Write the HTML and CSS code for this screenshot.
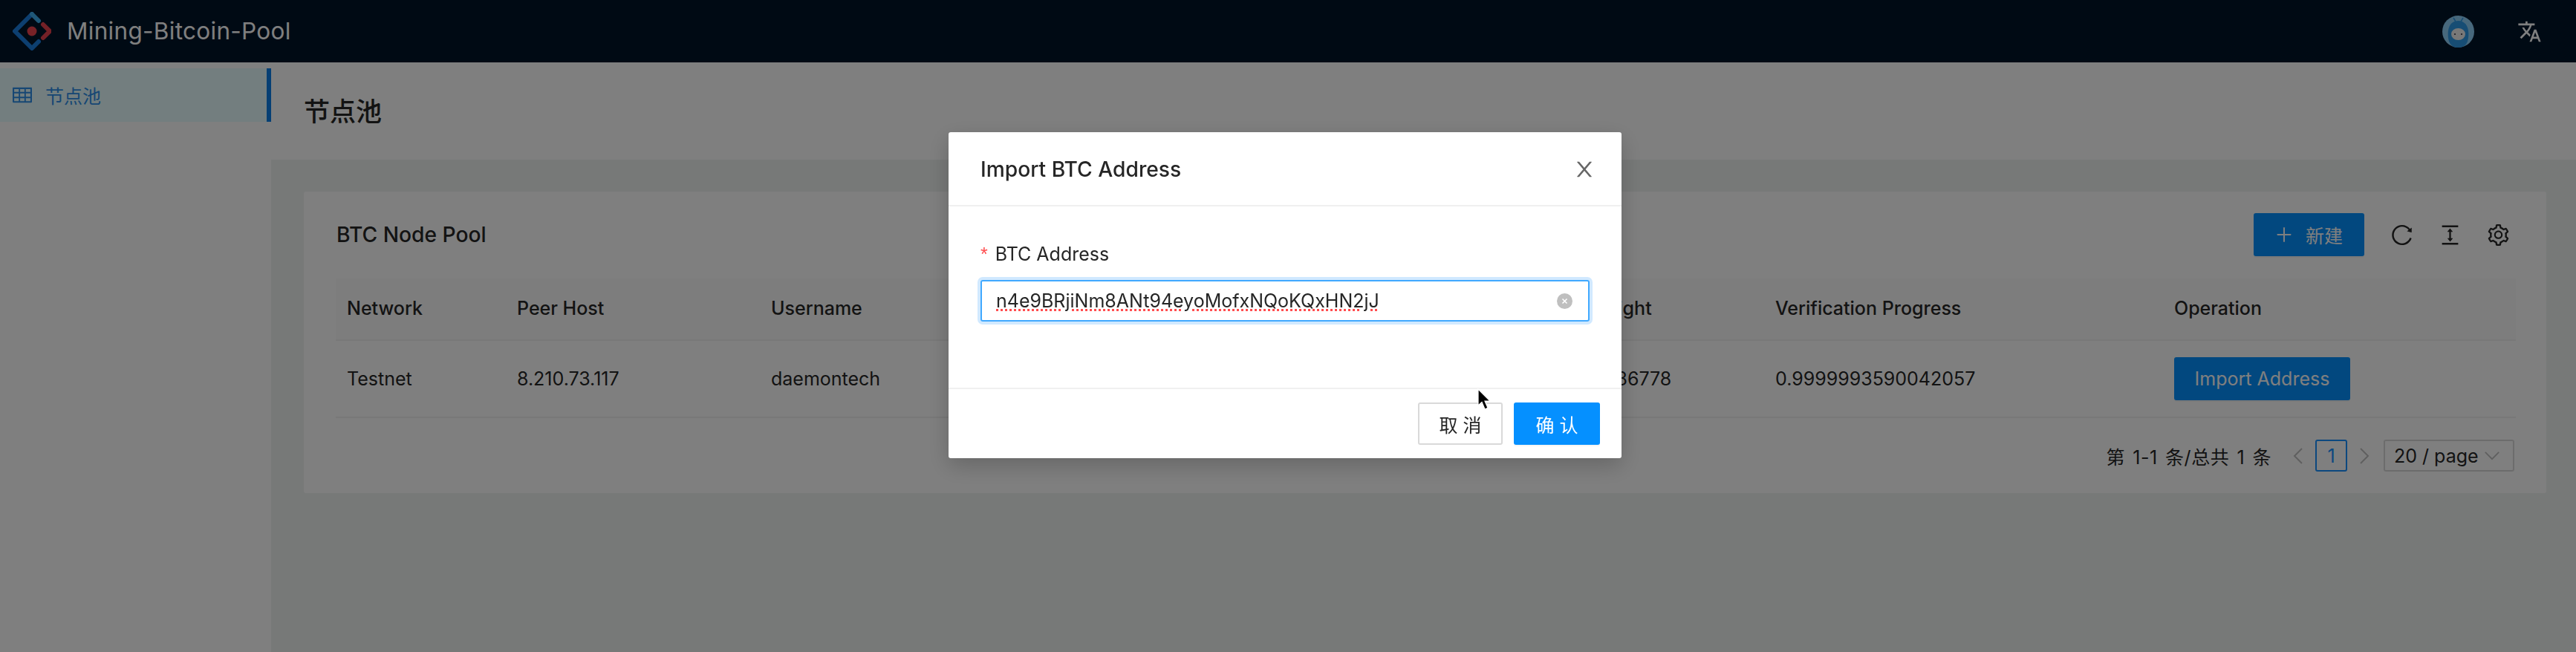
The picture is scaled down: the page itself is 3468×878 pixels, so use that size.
FILE: index.html
```html
<!DOCTYPE html>
<html lang="zh">
<head>
<meta charset="utf-8">
<title>Mining-Bitcoin-Pool</title>
<link rel="stylesheet" href="styles.css">
</head>
<body>
<div class="app">
  <header class="topbar">
    <svg class="logo" viewBox="0 0 52 52" aria-hidden="true">
      <path d="M26 3 L3 26 L26 49 L35 40" fill="none" stroke="#1a7fe0" stroke-width="6" stroke-linejoin="round" stroke-linecap="round"/>
      <path d="M26 3 L35 12" fill="none" stroke="#3fb0f0" stroke-width="6" stroke-linecap="round"/>
      <path d="M41 17 L50 26 L41 35" fill="none" stroke="#e8434f" stroke-width="6" stroke-linejoin="round" stroke-linecap="round"/>
      <circle cx="26" cy="26" r="6.5" fill="#f0444f"/>
    </svg>
    <div class="brand">Mining-Bitcoin-Pool</div>
    <div class="top-actions">
      <svg class="avatar" viewBox="0 0 43 43" aria-hidden="true">
        <circle cx="21.5" cy="21.5" r="21.5" fill="#8fd0f8"/>
        <path d="M8 30 C6 14 13 7 21.500 7 C30 7 37 14 35 30 C34 38 30 43 21.500 43 C13 43 9 38 8 30Z" fill="#2f9be8"/>
        <ellipse cx="21.5" cy="25" rx="9.500" ry="8" fill="#f0f0f0"/>
        <circle cx="17" cy="25" r="1.100" fill="#334"/>
        <circle cx="26" cy="25" r="1.100" fill="#334"/>
        <path d="M15 3 L18 8 M28 3 L25 8" stroke="#2f9be8" stroke-width="1.500"/>
      </svg>
      <svg class="translate" viewBox="0 0 24 24" aria-hidden="true"><path d="M12.87 15.07l-2.54-2.51.03-.03c1.74-1.94 2.98-4.17 3.71-6.53H17V4h-7V2H8v2H1v1.99h11.17C11.5 7.92 10.44 9.75 9 11.35 8.07 10.32 7.3 9.19 6.69 8h-2c.73 1.63 1.73 3.17 2.98 4.56l-5.09 5.02L4 19l5-5 3.11 3.11.76-2.04zM18.5 10h-2L12 22h2l1.12-3h4.75L21 22h2l-4.5-12zm-2.62 7l1.62-4.33L19.12 17h-3.24z"/></svg>
    </div>
  </header>
  <div class="below">
    <aside class="sidebar">
      <div class="menu-item">
        <svg class="menu-icon" viewBox="64 64 896 896" aria-hidden="true"><path d="M928 160H96c-17.7 0-32 14.3-32 32v640c0 17.7 14.3 32 32 32h832c17.700 0 32-14.300 32-32V192c0-17.700-14.300-32-32-32zm-40 208H676V232h212v136zm0 224H676V432h212v160zM412 432h200v160H412V432zm200-64H412V232h200v136zm-264 0H136V232h212v136zm-212 64h212v160H136V432zm0 224h212v136H136V656zm276 0h200v136H412V656zm476 136H676V656h212v136z"/></svg>
        <span>节点池</span>
      </div>
    </aside>
    <main class="main">
      <div class="page-head">节点池</div>
      <div class="page-body">
        <section class="card">
          <div class="toolbar">
            <div class="card-title">BTC Node Pool</div>
            <div class="tools">
              <button class="btn btn-primary btn-new">
                <svg class="plus" viewBox="64 64 896 896" aria-hidden="true"><path d="M482 152h60q8 0 8 8v704q0 8-8 8h-60q-8 0-8-8V160q0-8 8-8z"/><path d="M176 474h672q8 0 8 8v60q0 8-8 8H176q-8 0-8-8v-60q0-8 8-8z"/></svg>
                <span>新建</span>
              </button>
              <svg class="tool" viewBox="64 64 896 896" aria-hidden="true"><path d="M909.1 209.3l-56.4 44.1C775.8 155.1 656.2 92 521.9 92 290 92 102.3 279.5 102 511.5 101.7 743.7 289.8 932 521.9 932c181.3 0 335.8-115 394.6-276.1 1.5-4.2-.7-8.9-4.9-10.3l-56.7-19.5a8 8 0 00-10.1 4.8c-1.8 5-3.8 10-5.9 14.9-17.3 41-42.1 77.8-73.7 109.4A344.77 344.77 0 01655.9 829c-42.3 17.9-87.4 27-133.8 27-46.5 0-91.5-9.1-133.8-27A341.5 341.5 0 01279 755.2a342.16 342.16 0 01-73.7-109.4c-17.9-42.4-27-87.4-27-133.9s9.1-91.5 27-133.9c17.3-41 42.1-77.8 73.7-109.4 31.6-31.6 68.4-56.4 109.3-73.8 42.3-17.9 87.4-27 133.8-27 46.5 0 91.5 9.1 133.8 27a341.5 341.5 0 01109.3 73.8c9.9 9.9 19.2 20.4 27.8 31.4l-60.2 47a8 8 0 003 14.1l175.6 43c5 1.2 9.9-2.6 9.9-7.7l.8-180.9c-.1-6.6-7.8-10.3-13-6.2z"/></svg>
              <svg class="tool" viewBox="64 64 896 896" aria-hidden="true"><path d="M840 836H184c-4.4 0-8 3.6-8 8v60c0 4.4 3.6 8 8 8h656c4.4 0 8-3.6 8-8v-60c0-4.4-3.6-8-8-8zm0-724H184c-4.4 0-8 3.6-8 8v60c0 4.4 3.6 8 8 8h656c4.4 0 8-3.6 8-8v-60c0-4.4-3.6-8-8-8zM610.8 378c6 0 9.4-7 5.7-11.7L515.7 238.7a7.14 7.14 0 00-11.3 0L403.6 366.3a7.23 7.23 0 005.7 11.7H476v268h-62.8c-6 0-9.4 7-5.7 11.7l100.8 127.5c2.9 3.7 8.5 3.7 11.3 0l100.8-127.5c3.7-4.7.4-11.7-5.7-11.7H548V378h62.8z"/></svg>
              <svg class="tool" viewBox="64 64 896 896" aria-hidden="true"><path d="M924.8 625.7l-65.5-56c3.1-19 4.7-38.4 4.7-57.8s-1.6-38.8-4.7-57.8l65.5-56a32.03 32.03 0 009.3-35.2l-.9-2.6a443.74 443.74 0 00-79.7-137.9l-1.8-2.1a32.12 32.12 0 00-35.1-9.5l-81.3 28.9c-30-24.6-63.5-44-99.7-57.6l-15.7-85a32.05 32.05 0 00-25.8-25.7l-2.7-.5c-52.1-9.4-106.9-9.4-159 0l-2.7.5a32.05 32.05 0 00-25.8 25.7l-15.8 85.4a351.86 351.86 0 00-99 57.4l-81.9-29.1a32 32 0 00-35.1 9.5l-1.8 2.1a446.02 446.02 0 00-79.7 137.9l-.9 2.6c-4.5 12.5-.8 26.5 9.3 35.2l66.3 56.6c-3.1 18.8-4.6 38-4.6 57.1 0 19.2 1.5 38.4 4.6 57.1L99 625.5a32.03 32.03 0 00-9.3 35.2l.9 2.6c18.1 50.4 44.9 96.9 79.7 137.9l1.8 2.1a32.12 32.12 0 0035.1 9.5l81.9-29.1c29.8 24.5 63.1 43.9 99 57.4l15.8 85.4a32.05 32.05 0 0025.8 25.7l2.7.5a449.4 449.4 0 00159 0l2.7-.5a32.05 32.05 0 0025.8-25.7l15.7-85a350 350 0 0099.7-57.6l81.3 28.9a32 32 0 0035.1-9.5l1.8-2.1c34.8-41.1 61.6-87.5 79.7-137.9l.9-2.6c4.5-12.3.8-26.3-9.3-35zM788.3 465.9c2.5 15.1 3.8 30.6 3.8 46.1s-1.3 31-3.8 46.1l-6.6 40.1 74.7 63.9a370.03 370.03 0 01-42.6 73.6L721 702.8l-31.4 25.8c-23.9 19.6-50.5 35-79.3 45.8l-38.1 14.3-17.9 97a377.5 377.5 0 01-85 0l-17.9-97.2-37.8-14.5c-28.5-10.8-55-26.2-78.7-45.7l-31.4-25.9-93.4 33.2c-17-22.9-31.2-47.6-42.6-73.6l75.5-64.5-6.5-40c-2.4-14.9-3.7-30.3-3.7-45.5 0-15.3 1.2-30.6 3.7-45.5l6.5-40-75.5-64.5c11.3-26.1 25.6-50.7 42.6-73.6l93.4 33.2 31.4-25.9c23.7-19.5 50.2-34.9 78.7-45.7l37.9-14.3 17.9-97.2c28.1-3.2 56.8-3.2 85 0l17.9 97 38.1 14.3c28.7 10.8 55.4 26.2 79.3 45.8l31.4 25.8 92.8-32.9c17 22.9 31.2 47.6 42.6 73.6L781.8 426l6.5 39.9zM512 326c-97.2 0-176 78.8-176 176s78.8 176 176 176 176-78.8 176-176-78.8-176-176-176zm79.2 255.2A111.6 111.6 0 01512 614c-29.9 0-58-11.7-79.2-32.8A111.6 111.6 0 01400 502c0-29.9 11.7-58 32.8-79.2C454 401.6 482.1 390 512 390c29.9 0 58 11.6 79.2 32.8A111.6 111.6 0 01624 502c0 29.900-11.700 58-32.800 79.200z"/></svg>
            </div>
          </div>
          <div class="table">
            <div class="cell head">Network</div>
            <div class="cell head">Peer Host</div>
            <div class="cell head">Username</div>
            <div class="cell head">Height</div>
            <div class="cell head">Verification Progress</div>
            <div class="cell head">Operation</div>
            <div class="cell">Testnet</div>
            <div class="cell">8.210.73.117</div>
            <div class="cell">daemontech</div>
            <div class="cell">2586778</div>
            <div class="cell">0.9999993590042057</div>
            <div class="cell"><button class="btn btn-primary btn-import">Import Address</button></div>
          </div>
          <div class="pager">
            <span class="pager-total">第 1-1 条/总共 1 条</span>
            <svg class="chev" viewBox="0 0 14 24" aria-hidden="true"><path d="M12 2 L2 12 L12 22" fill="none" stroke="#bfbfbf" stroke-width="2"/></svg>
            <span class="page-num">1</span>
            <svg class="chev" viewBox="0 0 14 24" aria-hidden="true"><path d="M2 2 L12 12 L2 22" fill="none" stroke="#bfbfbf" stroke-width="2"/></svg>
            <div class="page-size">
              <span>20 / page</span>
              <svg class="caret" viewBox="0 0 24 14" aria-hidden="true"><path d="M2 2 L12 12 L22 2" fill="none" stroke="#bfbfbf" stroke-width="2"/></svg>
            </div>
          </div>
        </section>
      </div>
    </main>
  </div>
</div>

<div class="overlay"></div>

<div class="modal">
  <div class="modal-head">
    <div class="modal-title">Import BTC Address</div>
    <svg class="modal-close" viewBox="64 64 896 896" aria-hidden="true"><path d="M563.8 512l262.5-312.9c4.4-5.2.7-13.1-6.1-13.1h-79.8c-4.7 0-9.2 2.1-12.3 5.7L511.6 449.8 295.1 191.7c-3-3.6-7.5-5.7-12.3-5.7H203c-6.8 0-10.5 7.9-6.1 13.1L459.4 512 196.9 824.9A7.95 7.95 0 00203 838h79.8c4.7 0 9.2-2.1 12.3-5.7l216.5-258.1 216.5 258.1c3 3.6 7.5 5.7 12.3 5.7h79.8c6.8 0 10.5-7.900 6.100-13.100L563.800 512z"/></svg>
  </div>
  <div class="modal-body">
    <div class="field-label"><span class="required">*</span>BTC Address</div>
    <div class="input">
      <span class="input-text">n4e9BRjiNm8ANt94eyoMofxNQoKQxHN2jJ</span>
      <svg class="clear" viewBox="0 0 21 21" aria-hidden="true"><circle cx="10.500" cy="10.500" r="10.500" fill="#bfbfbf"/><path d="M7.500 7.500 L13.500 13.500 M13.500 7.500 L7.500 13.500" stroke="#fff" stroke-width="1.600"/></svg>
    </div>
  </div>
  <div class="modal-foot">
    <button class="btn btn-default">取 消</button>
    <button class="btn btn-primary btn-ok">确 认</button>
  </div>
</div>

<svg class="cursor" viewBox="0 0 18 30" aria-hidden="true"><path d="M1 1 L1 23 L6 18.500 L10 28 L14 26.300 L10 17 L17 17 Z" fill="#000" stroke="#fff" stroke-width="1.200"/></svg>
</body>
</html>
```
FILE: styles.css
```css
* { box-sizing: border-box; }
html, body { margin: 0; height: 100%; overflow: hidden; }
body {
  font-family: Inter, "Noto Sans CJK SC", sans-serif;
  font-size: 25px;
  color: #262626;
  background: #eff3f1;
}
.app { display: flex; flex-direction: column; height: 878px; }

.topbar {
  height: 84px;
  flex: none;
  background: #001529;
  display: flex;
  align-items: center;
  padding-left: 17px;
}
.logo { width: 52px; height: 52px; margin-right: 21px; }
.brand { color: #fff; font-size: 31.500px; line-height: 44px; letter-spacing: .3px; }
.top-actions { margin-left: auto; display: flex; align-items: center; gap: 58px; padding-right: 46px; }
.avatar { width: 43px; height: 43px; }
.translate { width: 33px; height: 33px; fill: #fff; }

.below { flex: 1; display: flex; min-height: 0; }
.sidebar { width: 365px; flex: none; background: #fff; padding-top: 8px; }
.menu-item {
  height: 72px;
  background: #e6fdff;
  border-right: 6px solid #0b7ee8;
  display: flex;
  align-items: center;
  gap: 18px;
  padding-left: 17px;
  color: #2e8fe8;
}
.menu-icon { width: 26px; height: 26px; fill: currentColor; }

.main { flex: 1; display: flex; flex-direction: column; min-width: 0; }
.page-head {
  height: 131px;
  flex: none;
  background: #fff;
  padding: 0 0 4px 44px;
  display: flex;
  align-items: center;
  font-size: 35px;
  font-weight: 500;
  color: #262626;
}
.page-body { flex: 1; padding: 43px 40px 0 44px; }
.card { background: #fff; padding: 29px 43px 29px 43px; border-radius: 3px; }

.toolbar { display: flex; align-items: center; justify-content: space-between; height: 58px; margin-bottom: 30px; padding-left: 1px; }
.card-title { font-size: 28.2px; font-weight: 500; }
.tools { display: flex; align-items: center; gap: 36px; padding-right: 7px; }
.tool { width: 29px; height: 29px; fill: #262626; }

.btn {
  font: inherit;
  border: 0;
  border-radius: 3px;
  display: inline-flex;
  align-items: center;
  justify-content: center;
  padding: 0;
}
.btn-primary { background: #0590ff; color: #fff; box-shadow: 0 2px 0 rgba(0,0,0,.04); }
.btn-new { width: 149px; height: 58px; gap: 17px; }
.plus { width: 24px; height: 24px; fill: #fff; }
.btn-import { width: 237px; height: 58px; }

.table {
  display: grid;
  grid-template-columns: 229px 342px 1107px 245px 537px 475px;
}
.cell {
  padding: 0 15px;
  height: 104px;
  display: flex;
  align-items: center;
  border-bottom: 2px solid #f0f0f0;
  background: #fff;
  white-space: nowrap;
}
.head { background: #fafafa; font-weight: 500; height: 84px; padding-bottom: 3px; }

.pager { display: flex; align-items: center; justify-content: flex-end; margin-top: 29px; height: 43px; }
.pager-total { margin-right: 29px; word-spacing: 2.500px; letter-spacing: .6px; }
.chev { width: 14px; height: 24px; }
.page-num {
  width: 43px;
  height: 43px;
  margin: 0 16px;
  border: 2px solid #1890ff;
  border-radius: 3px;
  color: #1890ff;
  display: flex;
  align-items: center;
  justify-content: center;
}
.page-size {
  width: 176px;
  height: 43px;
  margin-left: 19px;
  border: 2px solid #d9d9d9;
  border-radius: 3px;
  display: flex;
  align-items: center;
  padding-left: 12px;
  gap: 7px;
}
.caret { width: 22px; height: 13px; }

.overlay { position: fixed; inset: 0; background: rgba(0,0,0,.5); }

.modal {
  position: fixed;
  left: 1277px;
  top: 178px;
  width: 906px;
  height: 439px;
  background: #fff;
  border-radius: 3px;
  box-shadow: 0 10px 30px rgba(0,0,0,.2);
  display: flex;
  flex-direction: column;
}
.modal-head {
  height: 100px;
  flex: none;
  border-bottom: 2px solid #f0f0f0;
  padding: 2px 36px 0 43px;
  display: flex;
  align-items: center;
  justify-content: space-between;
}
.modal-title { font-size: 28.2px; font-weight: 500; color: #262626; }
.modal-close { width: 28px; height: 28px; fill: #666; }
.modal-body { flex: 1; padding: 43px 43px 0; }
.field-label { height: 42px; display: flex; align-items: center; margin-bottom: 14px; }
.required { color: #ff4d4f; margin-right: 10px; font-family: "Liberation Sans", sans-serif; }
.input {
  height: 56px;
  border: 2px solid #40a9ff;
  border-radius: 3px;
  box-shadow: 0 0 0 4px rgba(24,144,255,.2);
  display: flex;
  align-items: center;
  justify-content: space-between;
  padding: 0 21px 0 19px;
}
.input-text { text-decoration: underline dotted #ff4d4f 3px; text-underline-offset: 2px; }
.clear { width: 21px; height: 21px; }
.modal-foot {
  height: 95px;
  flex: none;
  border-top: 2px solid #f0f0f0;
  padding: 18px 29px 0 0;
  display: flex;
  justify-content: flex-end;
  align-items: flex-start;
  gap: 15px;
}
.btn-default { width: 114px; height: 57px; background: #fff; color: #262626; border: 2px solid #d9d9d9; }
.btn-ok { width: 116px; height: 57px; }

.cursor { position: fixed; left: 1989px; top: 523px; width: 18px; height: 30px; }
```
